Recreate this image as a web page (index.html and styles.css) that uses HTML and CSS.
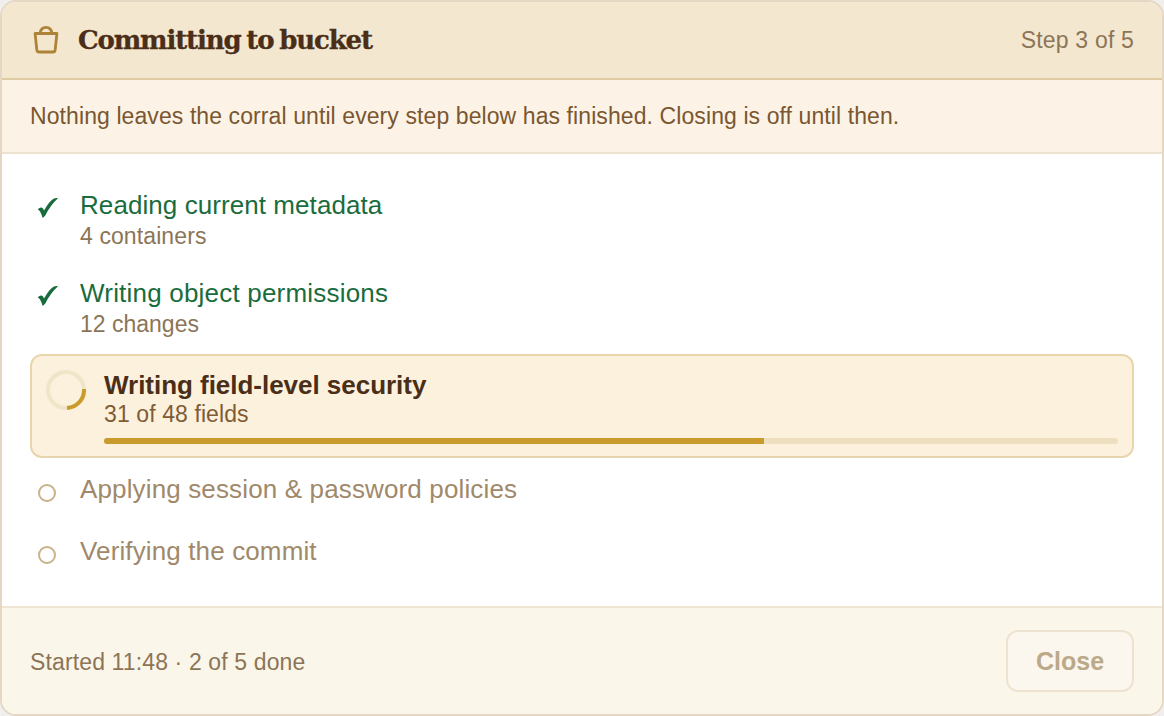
FILE: index.html
```html
<!DOCTYPE html>
<html lang="en">
<head>
<meta charset="utf-8">
<title>Committing to bucket</title>
<link rel="stylesheet" href="styles.css">
</head>
<body>
<section class="dialog">
  <header class="header">
    <svg class="bucket" width="32" height="32" viewBox="0 0 32 32" fill="none" stroke="currentColor" stroke-width="2.800" stroke-linejoin="round" stroke-linecap="round">
      <path d="M5.100 9.500H26.900L25.200 25.700Q24.900 28 22.800 28H9.200Q7.100 28 6.800 25.700Z"/>
      <path d="M10 9.300C11.300 1.500 20.700 1.500 22 9.300"/>
    </svg>
    <h1 class="title">Committing to bucket</h1>
    <span class="counter">Step 3 of 5</span>
  </header>
  <p class="note">Nothing leaves the corral until every step below has finished. Closing is off until then.</p>
  <ol class="steps">
    <li class="step done">
      <svg class="mark" width="22" height="22" viewBox="0 0 22 22"><path d="M.8 12.200Q3 9.800 5.200 10.800Q6.300 11.600 7 13.600Q12 4.500 16.500 1.800Q18.500 .8 21 1.200Q13 8.500 8.300 18.600Q6.500 21 5.400 20.600Q3.800 14 .8 12.200Z" fill="currentColor"/></svg>
      <div class="text"><div class="name n1">Reading current metadata</div><div class="detail d1">4 containers</div></div>
    </li>
    <li class="step done">
      <svg class="mark" width="22" height="22" viewBox="0 0 22 22"><path d="M.8 12.200Q3 9.800 5.200 10.800Q6.300 11.600 7 13.600Q12 4.500 16.500 1.800Q18.500 .8 21 1.200Q13 8.500 8.300 18.600Q6.500 21 5.400 20.600Q3.800 14 .8 12.200Z" fill="currentColor"/></svg>
      <div class="text"><div class="name n2">Writing object permissions</div><div class="detail">12 changes</div></div>
    </li>
    <li class="step active">
      <svg class="spinner" width="40" height="40" viewBox="0 0 40 40" fill="none" stroke-width="4"><circle cx="20" cy="20" r="18" stroke="#f0e4c9"/><path d="M38 19A18 18 0 0 1 21 38" stroke="#c99b2d"/></svg>
      <div class="text"><div class="name n3">Writing field-level security</div><div class="detail d3">31 of 48 fields</div>
        <div class="track"><div class="fill" style="width:65.1%"></div></div></div>
    </li>
    <li class="step pending"><span class="ring"></span><div class="name n4">Applying session &amp; password policies</div></li>
    <li class="step pending"><span class="ring"></span><div class="name n5">Verifying the commit</div></li>
  </ol>
  <footer class="footer">
    <span class="status">Started 11:48 · 2 of 5 done</span>
    <button class="close" disabled>Close</button>
  </footer>
</section>
</body>
</html>
```
FILE: styles.css
```css
* { box-sizing: border-box; }
body { margin: 0; background: #f0efee; font-family: "Liberation Sans", Arial, sans-serif; font-size: 23px; }
.dialog { width: 1164px; height: 716px; display: flex; flex-direction: column; border: 2px solid #e5d7c3; border-radius: 16px; overflow: hidden; background: #fff; }
.header { height: 78px; display: flex; align-items: center; padding: 0 28px; background: #f3e7d0; border-bottom: 2px solid #dfcba4; }
.bucket { color: #ad8437; flex: none; }
.title { margin: 0 0 0 16px; font-family: "DejaVu Serif", serif; font-weight: 700; font-size: 26px; letter-spacing: -1.15px; word-spacing: -2px; color: #4a2e18; white-space: nowrap; -webkit-text-stroke: 0.3px #4a2e18; }
.counter { margin-left: auto; color: #8c7556; letter-spacing: 0.18px; padding-top: 1px; }
.note { margin: 0; height: 74px; padding: 0 28px; line-height: 73px; letter-spacing: 0.09px; color: #7a5730; background: #fcf3e6; border-bottom: 2px solid #eee3cf; white-space: nowrap; }
.steps { flex: 1; margin: 0; padding: 24px 28px 0; list-style: none; }
.step { display: flex; }
.name { font-size: 26px; line-height: 30px; white-space: nowrap; }
.n1 { letter-spacing: 0.07px; }
.n2 { letter-spacing: 0.2px; }
.n3 { letter-spacing: -0.03px; }
.n4 { letter-spacing: 0.14px; }
.n5 { letter-spacing: 0.13px; }
.detail { line-height: 32px; color: #8c7556; }
.d1, .d3 { letter-spacing: 0.1px; }
.done { height: 88px; padding: 12px 0 0 7px; color: #1a6c3d; }
.mark { flex: none; margin: 7px 21px 0 0; }
.active { height: 104px; padding: 14px; gap: 18px; border: 2px solid #e8d5ae; border-radius: 12px; background: #fcf1dc; }
.spinner { flex: none; }
.active .text { flex: 1; }
.active .name { font-weight: 700; color: #4a2e18; }
.active .detail { line-height: 28px; color: #7f5c35; }
.track { height: 6px; margin-top: 10px; border-radius: 3px; background: #eedfc0; overflow: hidden; }
.fill { height: 100%; background: #c99b2d; }
.pending { height: 62px; padding: 16px 0 0 8px; gap: 24px; color: #9f896a; }
.ring { flex: none; width: 18px; height: 18px; margin-top: 10px; border: 2px solid #c7b28a; border-radius: 50%; }
.footer { height: 108px; padding: 0 28px; display: flex; align-items: center; justify-content: space-between; background: #fbf6ea; border-top: 2px solid #f0e5d3; color: #8c7556; }
.status { letter-spacing: 0.13px; padding-top: 2px; }
.close { width: 128px; height: 62px; padding: 0; border: 2px solid #eee3d0; border-radius: 12px; background: #fbf6ee; color: #bba988; font: 700 25px "Liberation Sans", Arial, sans-serif; }
```
